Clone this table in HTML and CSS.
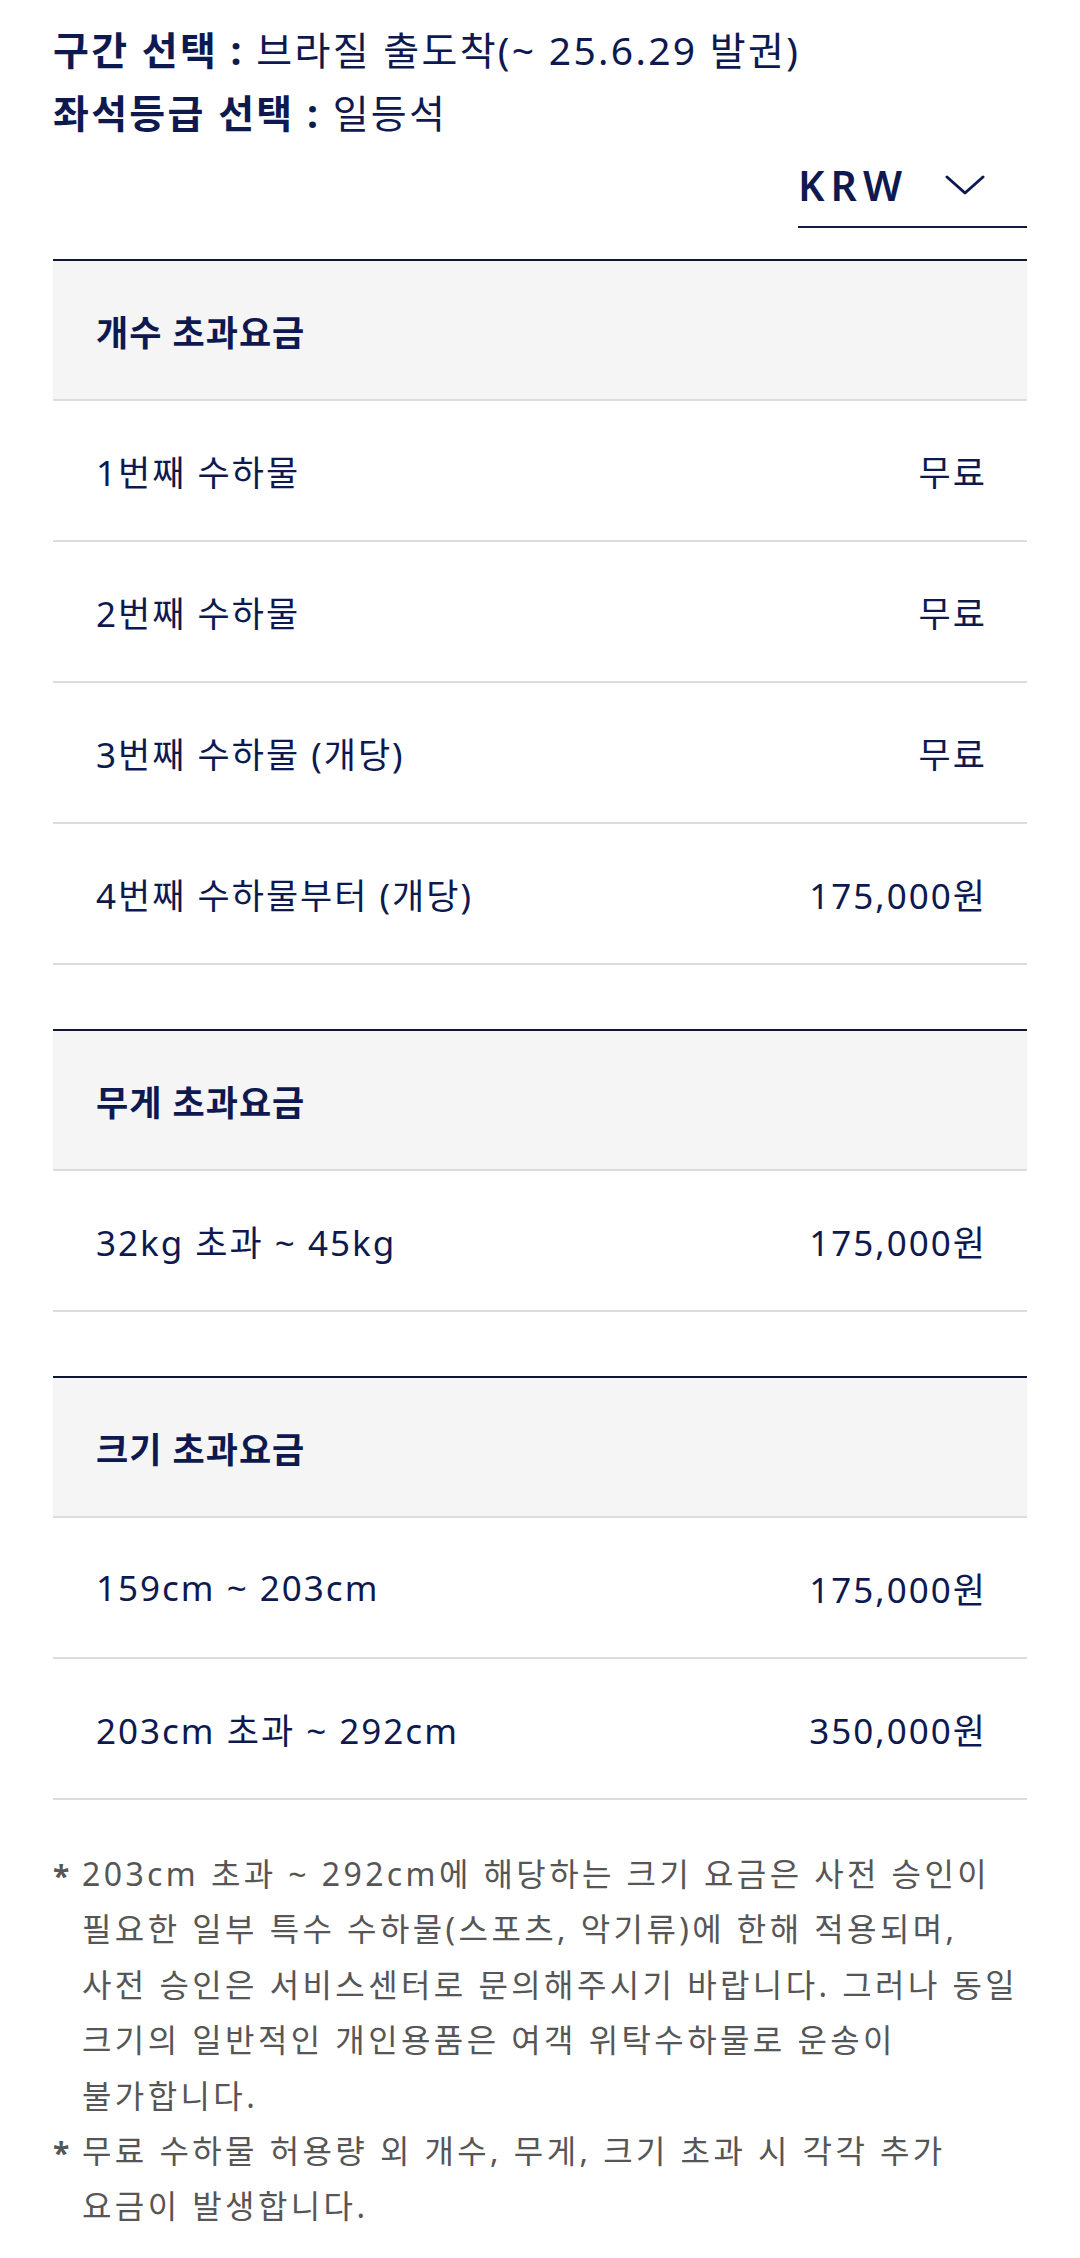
FILE: index.html
```html
<!DOCTYPE html>
<html lang="ko">
<head>
<meta charset="utf-8">
<title>수하물 초과요금</title>
<link rel="stylesheet" href="styles.css">
</head>
<body>
<div class="page">
  <div class="summary">
    <p class="summary-line"><strong>구간 선택 :</strong> 브라질 출도착(~ 25.6.29 발권)</p>
    <p class="summary-line"><strong>좌석등급 선택 :</strong> 일등석</p>
  </div>

  <div class="currency-row">
    <div class="currency-select">
      <span class="currency-code">KRW</span>
      <svg class="chevron" width="40" height="22" viewBox="0 0 40 22" aria-hidden="true">
        <path d="M2 3 L20 19 L38 3" fill="none" stroke="#0e1a4f" stroke-width="3" stroke-linecap="round" stroke-linejoin="round"/>
      </svg>
    </div>
  </div>

  <section class="fee-table">
    <div class="fee-head">개수 초과요금</div>
    <div class="fee-row"><span>1번째 수하물</span><span>무료</span></div>
    <div class="fee-row"><span>2번째 수하물</span><span>무료</span></div>
    <div class="fee-row"><span>3번째 수하물 (개당)</span><span>무료</span></div>
    <div class="fee-row"><span>4번째 수하물부터 (개당)</span><span>175,000원</span></div>
  </section>

  <section class="fee-table">
    <div class="fee-head">무게 초과요금</div>
    <div class="fee-row"><span>32kg 초과 ~ 45kg</span><span>175,000원</span></div>
  </section>

  <section class="fee-table">
    <div class="fee-head">크기 초과요금</div>
    <div class="fee-row"><span>159cm ~ 203cm</span><span>175,000원</span></div>
    <div class="fee-row"><span>203cm 초과 ~ 292cm</span><span>350,000원</span></div>
  </section>

  <ul class="notes">
    <li>203cm 초과 ~ 292cm에 해당하는 크기 요금은 사전 승인이<br>필요한 일부 특수 수하물(스포츠, 악기류)에 한해 적용되며,<br>사전 승인은 서비스센터로 문의해주시기 바랍니다. 그러나 동일<br>크기의 일반적인 개인용품은 여객 위탁수하물로 운송이<br>불가합니다.</li>
    <li>무료 수하물 허용량 외 개수, 무게, 크기 초과 시 각각 추가<br>요금이 발생합니다.</li>
  </ul>
</div>
</body>
</html>
```

FILE: styles.css
```css
* { box-sizing: border-box; }

html, body {
  margin: 0;
  padding: 0;
  background: #ffffff;
}

body {
  font-family: "Noto Sans", "Noto Sans CJK KR", sans-serif;
  color: #0e1a4f;
}

.page {
  padding: 18px 53px 40px;
}

.summary-line {
  margin: 0;
  font-size: 39px;
  line-height: 63px;
  letter-spacing: 2.3px;
  font-weight: 400;
  white-space: nowrap;
}

.summary-line strong {
  font-weight: 700;
}

.currency-row {
  display: flex;
  justify-content: flex-end;
}

.currency-select {
  width: 229px;
  height: 84px;
  display: flex;
  align-items: center;
  justify-content: space-between;
  padding-right: 42px;
  border-bottom: 2px solid #0e1a3f;
}

.currency-code {
  font-family: "Noto Sans", sans-serif;
  font-size: 41px;
  font-weight: 600;
  letter-spacing: 6px;
  color: #0e1a4f;
}

.chevron {
  display: block;
}

.fee-table {
  border-top: 2px solid #0e1833;
  margin-top: 31px;
}

.fee-table + .fee-table {
  margin-top: 64px;
}

.fee-head {
  height: 140px;
  background: #f5f5f6;
  border-bottom: 2px solid #dcdcdc;
  display: flex;
  align-items: center;
  padding: 0 43px;
  font-size: 35px;
  letter-spacing: 1px;
  font-weight: 700;
}

.fee-row {
  height: 141px;
  border-bottom: 2px solid #dcdcdc;
  display: flex;
  align-items: center;
  justify-content: space-between;
  padding: 0 42px 0 43px;
  font-size: 35px;
  letter-spacing: 2px;
  font-weight: 400;
}

.fee-row span:last-child {
  margin-right: -2px;
}

.notes {
  list-style: none;
  margin: 46px 0 0;
  padding: 0;
  color: #565656;
  font-size: 32px;
  letter-spacing: 3.4px;
  line-height: 55.4px;
}

.notes li {
  position: relative;
  padding-left: 29px;
  white-space: nowrap;
}

.notes li::before {
  content: "*";
  position: absolute;
  left: 0;
  top: 2px;
  font-weight: 700;
  font-size: 30px;
}
```
